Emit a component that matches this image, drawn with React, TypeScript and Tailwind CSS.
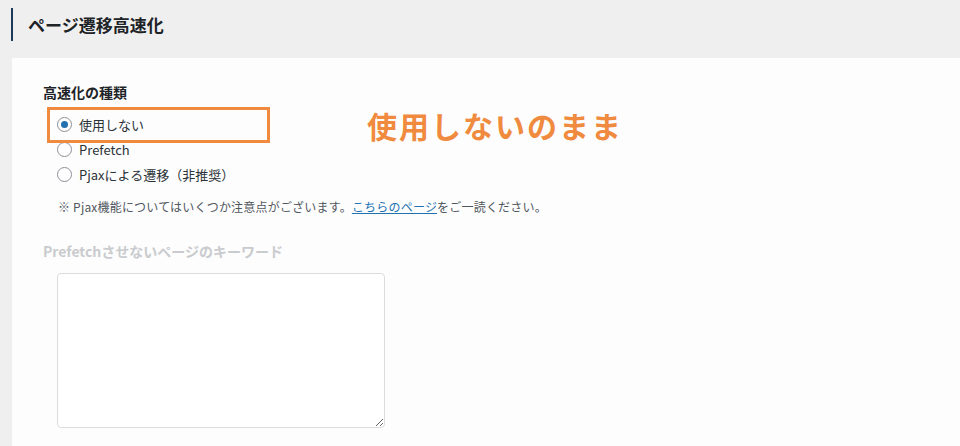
import React from "react";

const font = { fontFamily: '"Noto Sans CJK JP", "Noto Sans", sans-serif' };

function Radio({ checked, label }: { checked?: boolean; label: string }) {
  return (
    <div className="flex items-center h-[25px] pl-[14px]">
      <span className="w-[15px] h-[15px] rounded-full border border-[#8c8f94] bg-white flex items-center justify-center shrink-0">
        {checked && <span className="w-[7px] h-[7px] rounded-full bg-[#2271b1]" />}
      </span>
      <span className="ml-[7px] text-[13px] leading-[20px] text-[#2c3338]">{label}</span>
    </div>
  );
}

export default function App() {
  return (
    <div className="w-[960px] h-[446px] bg-[#efefef] overflow-hidden" style={font}>
      <div className="h-[58px] pt-[8px] pl-[11px]">
        <div className="h-[33px] border-l-[2px] border-[#1d3a5c] pl-[15px] flex items-center">
          <h1 className="text-[17px] font-bold text-[#1d2327] leading-none">ページ遷移高速化</h1>
        </div>
      </div>
      <div className="ml-[12px] h-[388px] bg-[#fdfdfd] pl-[31px] pt-[24px] relative">
        <div className="text-[14px] font-bold leading-[20px] text-[#1d2327]">高速化の種類</div>
        <div className="mt-[10px] relative">
          <div className="absolute left-[4px] top-[-5px] w-[223px] h-[36px] border-[3px] border-[#f08a3e]" />
          <Radio checked label="使用しない" />
          <Radio label="Prefetch" />
          <Radio label="Pjaxによる遷移（非推奨）" />
        </div>
        <div className="mt-[10px] pl-[15px] text-[12px] leading-[20px] text-[#50575e] tracking-[0.2px]">
          ※ Pjax機能についてはいくつか注意点がございます。
          <a className="text-[#2271b1] underline">こちらのページ</a>
          をご一読ください。
        </div>
        <div className="mt-[24px] text-[14px] leading-[20px] text-[#c9cbce]">
          <span className="font-bold">Prefetch</span>
          <span className="font-semibold">させないページのキーワード</span>
        </div>
        <textarea
          className="block mt-[12px] ml-[14px] w-[328px] h-[155px] border border-[#dcdcde] rounded-[4px] bg-white"
          readOnly
        />
        <div className="absolute left-[355px] top-[47px] text-[30px] font-bold leading-[40px] text-[#f08a3e] tracking-[2px]">
          使用しないのまま
        </div>
      </div>
    </div>
  );
}
